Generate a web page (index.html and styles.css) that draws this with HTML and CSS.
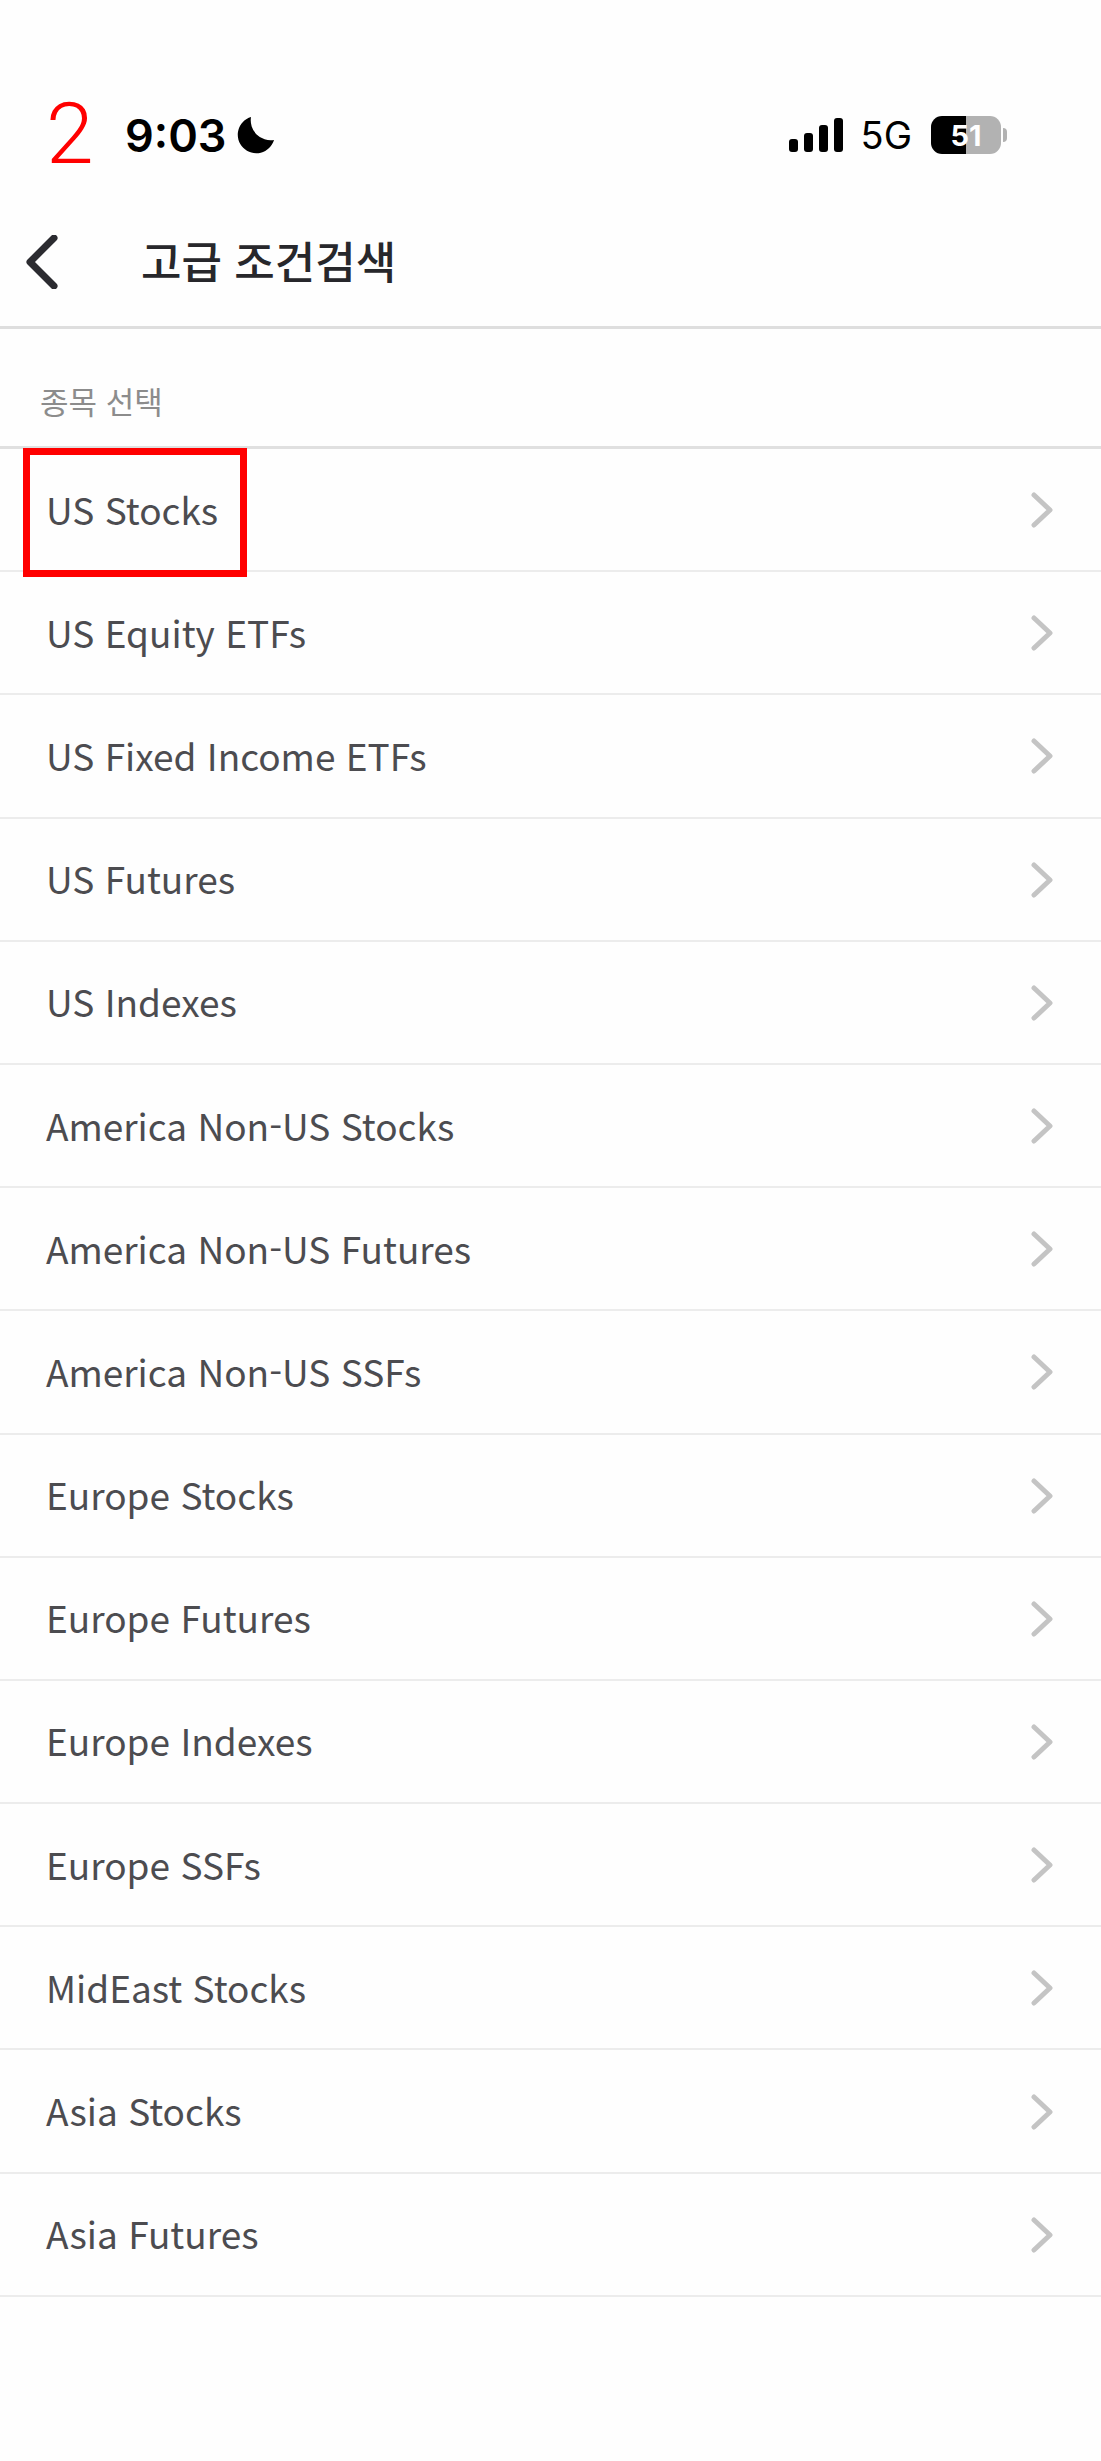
FILE: index.html
```html
<!DOCTYPE html>
<html lang="ko">
<head>
  <meta charset="UTF-8" />
  <title>고급 조건검색</title>
  <link rel="stylesheet" href="styles.css">
</head>
<body>
  <!-- Status bar -->
  <div class="status-bar">
    <div class="status-left">
      <span class="time">9:03</span>
      <svg class="moon" viewBox="0 0 38 38"><path d="M14 1 A18.500 18.500 0 1 0 37 24 A20 20 0 0 1 14 1 Z" fill="#000"/></svg>
    </div>
    <div class="status-right">
      <div class="signal">
        <span class="bar bar-1"></span>
        <span class="bar bar-2"></span>
        <span class="bar bar-3"></span>
        <span class="bar bar-4"></span>
      </div>
      <span class="network">5G</span>
      <div class="battery"><span>51</span></div>
      <span class="battery-cap"></span>
    </div>
  </div>

  <!-- Header -->
  <div class="header">
    <svg class="back" viewBox="0 0 32 54"><path d="M28 3 L4 27 L28 51" fill="none" stroke="#2b2b30" stroke-width="7" stroke-linecap="round" stroke-linejoin="round"/></svg>
    <h1>고급 조건검색</h1>
  </div>

  <div class="section-label">종목 선택</div>

  <!-- List -->
  <ul class="list">
    <li>US Stocks<svg class="chevron" viewBox="0 0 22 36"><path d="M3 3 L19 18 L3 33"/></svg></li>
    <li>US Equity ETFs<svg class="chevron" viewBox="0 0 22 36"><path d="M3 3 L19 18 L3 33"/></svg></li>
    <li>US Fixed Income ETFs<svg class="chevron" viewBox="0 0 22 36"><path d="M3 3 L19 18 L3 33"/></svg></li>
    <li>US Futures<svg class="chevron" viewBox="0 0 22 36"><path d="M3 3 L19 18 L3 33"/></svg></li>
    <li>US Indexes<svg class="chevron" viewBox="0 0 22 36"><path d="M3 3 L19 18 L3 33"/></svg></li>
    <li>America Non-US Stocks<svg class="chevron" viewBox="0 0 22 36"><path d="M3 3 L19 18 L3 33"/></svg></li>
    <li>America Non-US Futures<svg class="chevron" viewBox="0 0 22 36"><path d="M3 3 L19 18 L3 33"/></svg></li>
    <li>America Non-US SSFs<svg class="chevron" viewBox="0 0 22 36"><path d="M3 3 L19 18 L3 33"/></svg></li>
    <li>Europe Stocks<svg class="chevron" viewBox="0 0 22 36"><path d="M3 3 L19 18 L3 33"/></svg></li>
    <li>Europe Futures<svg class="chevron" viewBox="0 0 22 36"><path d="M3 3 L19 18 L3 33"/></svg></li>
    <li>Europe Indexes<svg class="chevron" viewBox="0 0 22 36"><path d="M3 3 L19 18 L3 33"/></svg></li>
    <li>Europe SSFs<svg class="chevron" viewBox="0 0 22 36"><path d="M3 3 L19 18 L3 33"/></svg></li>
    <li>MidEast Stocks<svg class="chevron" viewBox="0 0 22 36"><path d="M3 3 L19 18 L3 33"/></svg></li>
    <li>Asia Stocks<svg class="chevron" viewBox="0 0 22 36"><path d="M3 3 L19 18 L3 33"/></svg></li>
    <li>Asia Futures<svg class="chevron" viewBox="0 0 22 36"><path d="M3 3 L19 18 L3 33"/></svg></li>
  </ul>

  <!-- Red annotations on top of the screenshot -->
  <div class="step-number">2</div>
  <div class="step-box"></div>
</body>
</html>
```

FILE: styles.css
```css
/* Reset & base styles */
* {
  margin: 0;
  padding: 0;
  box-sizing: border-box;
}
html, body {
  width: 100%;
  height: 100%;
  overflow: hidden;
  background: #fefefe;
  font-family: "Noto Sans CJK KR", "Noto Sans", sans-serif;
}
body {
  position: relative;
}

/* Status bar */
.status-bar {
  display: flex;
  justify-content: space-between;
  align-items: center;
  height: 96px;
  margin-top: 87px;
  padding: 0 94px 0 125px;
}
.status-left {
  display: flex;
  align-items: center;
  gap: 11px;
}
.time {
  font-family: Inter, sans-serif;
  font-weight: 600;
  font-size: 45px;
  line-height: 1;
  color: #000;
}
.moon {
  width: 38px;
  height: 38px;
}
.status-right {
  display: flex;
  align-items: center;
}
.signal {
  display: flex;
  align-items: flex-end;
  gap: 6px;
  height: 34px;
  margin-right: 18px;
}
.bar {
  width: 9px;
  background: #000;
  border-radius: 3px;
}
.bar-1 { height: 13px; }
.bar-2 { height: 19px; }
.bar-3 { height: 27px; }
.bar-4 { height: 34px; }
.network {
  font-family: Inter, sans-serif;
  font-size: 38px;
  line-height: 1;
  color: #000;
  margin-right: 19px;
}
.battery {
  display: flex;
  align-items: center;
  justify-content: center;
  width: 70px;
  height: 38px;
  border-radius: 11px;
  background: linear-gradient(to right, #000 50%, #b2b2b2 50%);
}
.battery span {
  font-family: Inter, sans-serif;
  font-weight: 700;
  font-size: 29px;
  line-height: 1;
  color: #fff;
}
.battery-cap {
  width: 4px;
  height: 14px;
  margin-left: 2px;
  border-radius: 0 4px 4px 0;
  background: #b2b2b2;
}

/* Header */
.header {
  display: flex;
  align-items: center;
  height: 146px;
  padding: 11px 0 0 26px;
  border-bottom: 3px solid #dedede;
}
.back {
  width: 32px;
  height: 54px;
  margin: 4px 83px 0 0;
}
.header h1 {
  font-size: 44px;
  font-weight: 500;
  line-height: 1;
  color: #27272b;
}

/* Section label */
.section-label {
  display: flex;
  align-items: center;
  height: 120px;
  padding: 26px 0 0 40px;
  font-size: 31px;
  color: #8c8c8c;
  border-bottom: 3px solid #e0e0e0;
}

/* List rows */
.list {
  list-style: none;
}
.list li {
  display: flex;
  justify-content: space-between;
  align-items: center;
  height: 123.2px;
  padding: 0 48px 2px 46px;
  font-size: 37px;
  color: #4c4c50;
  border-bottom: 2px solid #ececec;
}
.chevron {
  width: 22px;
  height: 36px;
  margin-top: 3px;
  fill: none;
  stroke: #c4c4c4;
  stroke-width: 5;
  stroke-linecap: round;
  stroke-linejoin: round;
}

/* Red annotations */
.step-number {
  position: absolute;
  top: 84px;
  left: 46px;
  font-family: Roboto, sans-serif;
  font-weight: 300;
  font-size: 86px;
  line-height: 100px;
  color: #ff0000;
}
.step-box {
  position: absolute;
  top: 448px;
  left: 23px;
  width: 224px;
  height: 129px;
  border: 7px solid #ff0000;
}
```
